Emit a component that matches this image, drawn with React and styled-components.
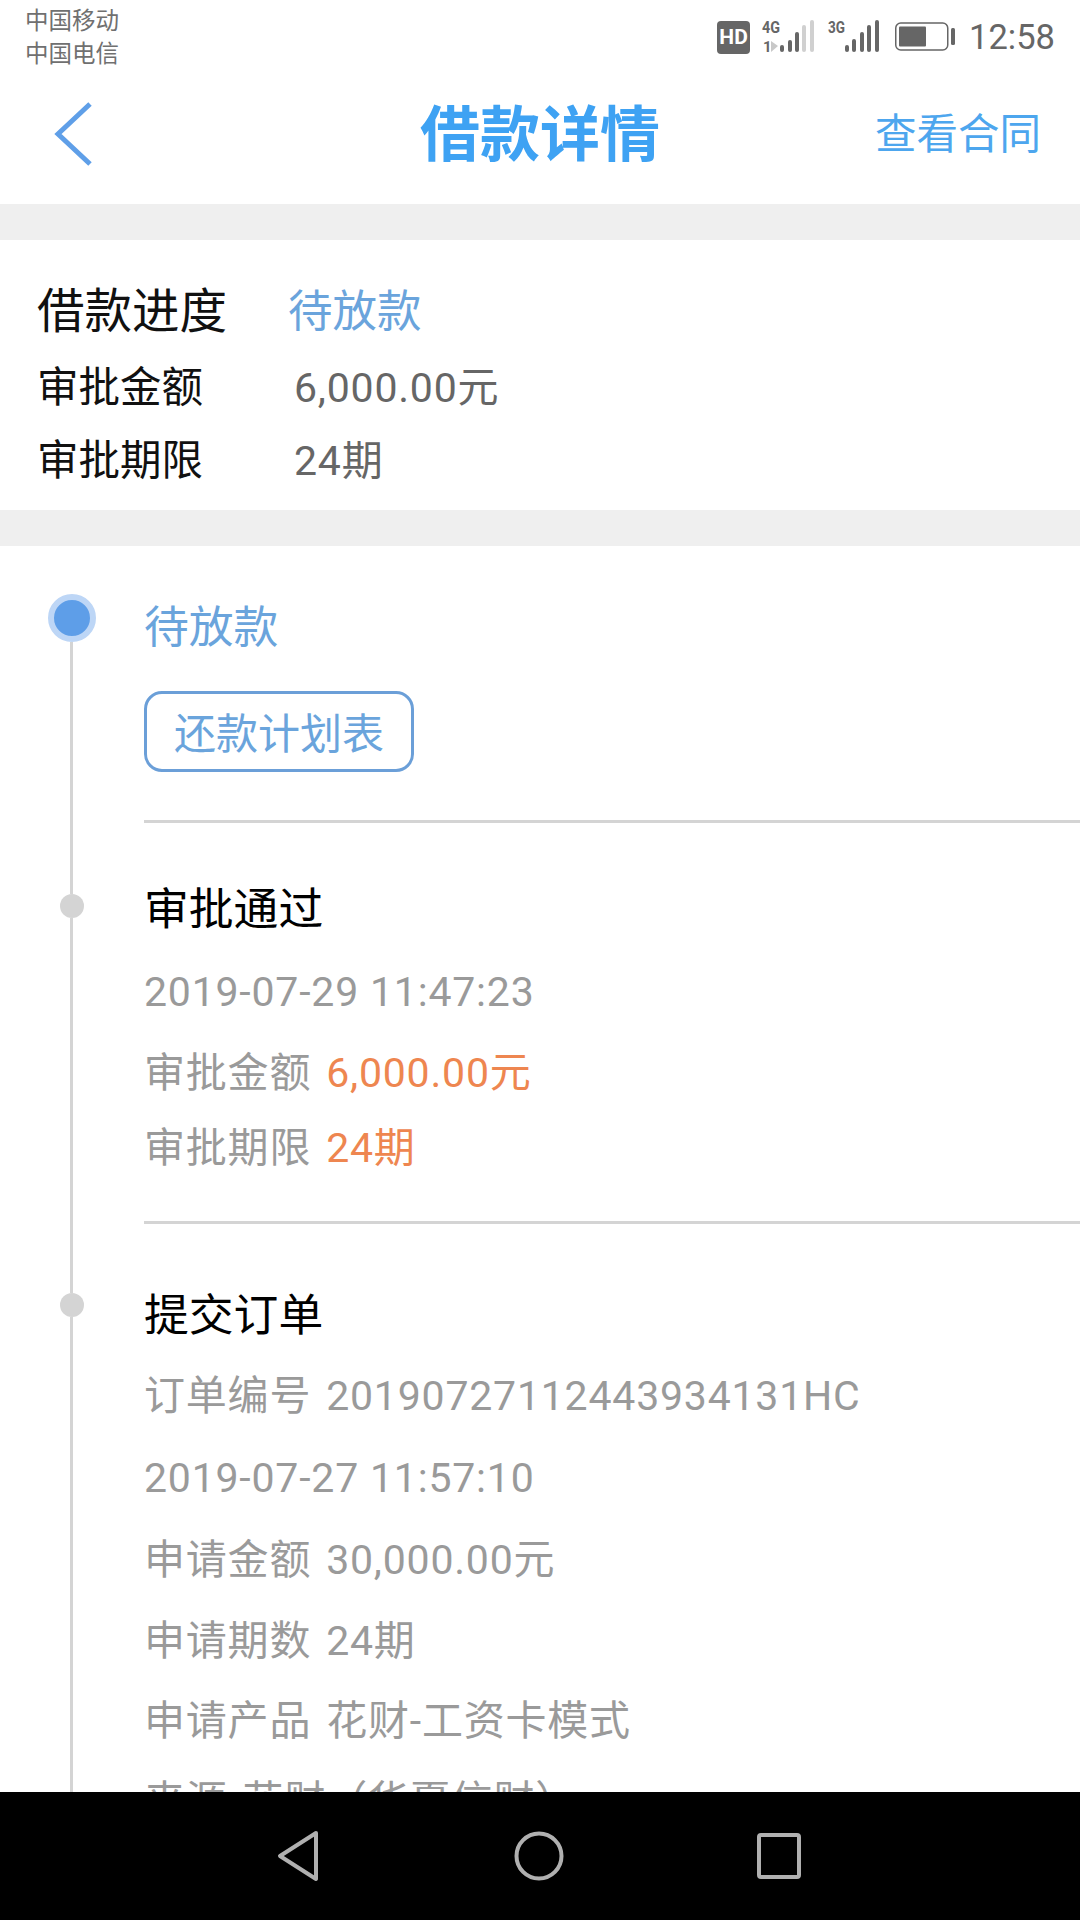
import styled, { createGlobalStyle } from "styled-components";

const GlobalStyle = createGlobalStyle`
  html, body {
    margin: 0;
    padding: 0;
    background: #fff;
  }
  body {
    font-family: Roboto, "Noto Sans CJK SC", sans-serif;
  }
`;

function App() {
  return (
    <>
      <GlobalStyle />
      <Screen>
        <StatusBar>
          <Carriers>
            <div>中国移动</div>
            <div>中国电信</div>
          </Carriers>
          <StatusIcons>
            <HdBadge>HD</HdBadge>
            <SignalIcons />
            <BatteryIcon />
            <Clock>12:58</Clock>
          </StatusIcons>
        </StatusBar>

        <NavBar>
          <BackButton>
            <svg width="40" height="64" viewBox="0 0 40 64" fill="none">
              <path d="M36 2 L4 32 L36 62" stroke="#5f9fe8" strokeWidth="5" />
            </svg>
          </BackButton>
          <Title>借款详情</Title>
          <ContractLink>查看合同</ContractLink>
        </NavBar>

        <Content>
          <Gap />
          <Summary>
            <SummaryHead>
              <HeadLabel>借款进度</HeadLabel>
              <HeadValue>待放款</HeadValue>
            </SummaryHead>
            <SummaryRow $mt={12}>
              <SummaryLabel>审批金额</SummaryLabel>
              <SummaryValue>6,000.00元</SummaryValue>
            </SummaryRow>
            <SummaryRow $mt={13}>
              <SummaryLabel>审批期限</SummaryLabel>
              <SummaryValue>24期</SummaryValue>
            </SummaryRow>
          </Summary>
          <Gap />

          <Timeline>
            <Step>
              <Rail $top={48}>
                <ActiveDot />
                <Wire />
              </Rail>
              <StepBody $pt={52} $pb={48}>
                <ActiveTitle>待放款</ActiveTitle>
                <PlanButton>还款计划表</PlanButton>
              </StepBody>
            </Step>

            <Step>
              <Rail>
                <Wire $h={71} />
                <Dot />
                <Wire />
              </Rail>
              <StepBody $pt={57} $pb={43}>
                <StepTitle>审批通过</StepTitle>
                <InfoRow $gap={22}>2019-07-29 11:47:23</InfoRow>
                <InfoRow $gap={21}>
                  <InfoLabel>审批金额</InfoLabel> <Amount>6,000.00元</Amount>
                </InfoRow>
                <InfoRow $gap={15}>
                  <InfoLabel>审批期限</InfoLabel> <Amount>24期</Amount>
                </InfoRow>
              </StepBody>
            </Step>

            <Step>
              <Rail>
                <Wire $h={69} />
                <Dot />
                <Wire />
              </Rail>
              <StepBody $pt={62} $pb={60} $last>
                <StepTitle>提交订单</StepTitle>
                <InfoRow $gap={20}>
                  <InfoLabel>订单编号</InfoLabel> 20190727112443934131HC
                </InfoRow>
                <InfoRow $gap={22}>2019-07-27 11:57:10</InfoRow>
                <InfoRow $gap={22}>
                  <InfoLabel>申请金额</InfoLabel> 30,000.00元
                </InfoRow>
                <InfoRow>
                  <InfoLabel>申请期数</InfoLabel> 24期
                </InfoRow>
                <InfoRow $gap={20}>
                  <InfoLabel>申请产品</InfoLabel> 花财-工资卡模式
                </InfoRow>
                <InfoRow $gap={20}>
                  <InfoLabel>来源</InfoLabel> 花财（华夏信财）
                </InfoRow>
              </StepBody>
            </Step>
          </Timeline>
        </Content>

        <BottomNav>
          <svg width="48" height="54" viewBox="0 0 48 54" fill="none">
            <path d="M41 4 L5 27 L41 50 Z" stroke="#b0b0b0" strokeWidth="4" strokeLinejoin="round" />
          </svg>
          <svg width="52" height="52" viewBox="0 0 52 52" fill="none">
            <circle cx="26" cy="26" r="22.5" stroke="#b0b0b0" strokeWidth="4" />
          </svg>
          <svg width="46" height="48" viewBox="0 0 46 48" fill="none">
            <rect x="3" y="3" width="40" height="42" rx="2" stroke="#b0b0b0" strokeWidth="4" />
          </svg>
        </BottomNav>
      </Screen>
    </>
  );
}

function SignalIcons() {
  const bars1 = [
    [2, 7, "#666"],
    [10, 12, "#666"],
    [17, 20, "#666"],
    [24, 27, "#d0d0d0"],
    [32, 32, "#d0d0d0"],
  ];
  const bars2 = [
    [67, 7],
    [74, 13],
    [82, 20],
    [89, 27],
    [97, 32],
  ];
  return (
    <SignalSvg width="122" height="40" viewBox="-20 0 122 40">
      <text x="-18" y="14" fontSize="17" fontWeight="700" fill="#666" fontFamily="Roboto, sans-serif" textLength="18" lengthAdjust="spacingAndGlyphs">4G</text>
      <text x="-17" y="33" fontSize="15" fontWeight="700" fill="#666" fontFamily="Roboto, sans-serif">1</text>
      <path d="M-9 22 L-2 27 L-9 33 Z" fill="#c8c8c8" />
      {bars1.map(([x, h, c]) => (
        <rect key={x} x={x - 2} y={33 - h} width="4" height={h} rx="2" fill={c} />
      ))}
      <text x="48" y="14" fontSize="17" fontWeight="700" fill="#666" fontFamily="Roboto, sans-serif" textLength="17" lengthAdjust="spacingAndGlyphs">3G</text>
      {bars2.map(([x, h]) => (
        <rect key={x} x={x - 2} y={33 - h} width="4" height={h} rx="2" fill="#666" />
      ))}
    </SignalSvg>
  );
}

function BatteryIcon() {
  return (
    <svg width="60" height="30" viewBox="0 0 60 30" fill="none">
      <rect x="0.75" y="1" width="52" height="27" rx="5" stroke="#666" strokeWidth="1.5" />
      <rect x="4" y="4.5" width="27" height="20" rx="1" fill="#666" />
      <rect x="56" y="6" width="4" height="17" rx="1.5" fill="#666" />
    </svg>
  );
}

export default App;

const Screen = styled.div`
  width: 1080px;
  height: 1920px;
  display: flex;
  flex-direction: column;
  overflow: hidden;
  background: #fff;
`;

const StatusBar = styled.div`
  height: 74px;
  flex: none;
  display: flex;
  justify-content: space-between;
  padding: 5px 25px 0 25px;
  box-sizing: border-box;
`;

const Carriers = styled.div`
  font-size: 23.5px;
  line-height: 33px;
  color: #707070;
`;

const StatusIcons = styled.div`
  display: flex;
  align-items: center;
  height: 64px;
`;

const SignalSvg = styled.svg`
  margin: 4px 13px 0 0;
  overflow: visible;
`;

const HdBadge = styled.span`
  width: 33px;
  height: 33px;
  border-radius: 4px;
  background: #666;
  color: #fff;
  font-size: 21px;
  font-weight: 700;
  line-height: 33px;
  text-align: center;
  margin-right: 10px;
`;

const Clock = styled.span`
  font-size: 34.5px;
  color: #666;
  margin-left: 14px;
`;

const NavBar = styled.div`
  height: 130px;
  flex: none;
  display: grid;
  grid-template-columns: 1fr auto 1fr;
  align-items: center;
  padding: 0 39px 16px 39px;
  box-sizing: border-box;
`;

const BackButton = styled.div`
  display: flex;
  margin: 6px 0 0 15px;
`;

const Title = styled.div`
  font-size: 60px;
  font-weight: 700;
  color: #3ea2f3;
  margin-top: -4px;
`;

const ContractLink = styled.div`
  justify-self: end;
  font-size: 41.5px;
  color: #4da6ee;
`;

const Content = styled.div`
  flex: 1;
  min-height: 0;
  overflow: hidden;
`;

const Gap = styled.div`
  height: 36px;
  background: #efefef;
`;

const Summary = styled.div`
  height: 270px;
  box-sizing: border-box;
  padding: 32px 0 0 37px;
`;

const SummaryHead = styled.div`
  display: flex;
  height: 70px;
  align-items: center;
`;

const HeadLabel = styled.div`
  width: 251px;
  font-size: 47.5px;
  color: #111;
`;

const HeadValue = styled.div`
  font-size: 44.5px;
  color: #6aa4dc;
`;

const SummaryRow = styled.div`
  display: flex;
  align-items: center;
  height: 60px;
  margin-top: ${(p) => p.$mt}px;
`;

const SummaryLabel = styled.div`
  width: 257px;
  font-size: 41.5px;
  color: #111;
`;

const SummaryValue = styled.div`
  font-size: 41px;
  letter-spacing: 0.8px;
  color: #666;
`;

const Timeline = styled.div`
  display: flex;
  flex-direction: column;
`;

const Step = styled.div`
  display: flex;
`;

const Rail = styled.div`
  width: 143px;
  margin-right: 1px;
  flex: none;
  display: flex;
  flex-direction: column;
  align-items: center;
  padding-top: ${(p) => p.$top || 0}px;
`;

const Wire = styled.div`
  width: 3px;
  background: #d4d4d4;
  flex: ${(p) => (p.$h ? "none" : 1)};
  height: ${(p) => (p.$h ? `${p.$h}px` : "auto")};
`;

const Dot = styled.div`
  width: 24px;
  height: 24px;
  border-radius: 50%;
  background: #d4d4d4;
  flex: none;
`;

const ActiveDot = styled.div`
  width: 36px;
  height: 36px;
  border-radius: 50%;
  background: #5e9ee8;
  border: 6px solid #bdd6f6;
  flex: none;
`;

const StepBody = styled.div`
  flex: 1;
  padding-top: ${(p) => p.$pt}px;
  padding-bottom: ${(p) => p.$pb}px;
  border-bottom: ${(p) => (p.$last ? "none" : "3px solid #d4d4d4")};
`;

const ActiveTitle = styled.div`
  font-size: 44.8px;
  line-height: 60px;
  color: #6aa4dc;
`;

const PlanButton = styled.button`
  display: block;
  width: 270px;
  height: 81px;
  margin-top: 33px;
  padding: 0 0 2px;
  border: 3px solid #6b9fd8;
  border-radius: 18px;
  background: #fff;
  font-family: inherit;
  font-size: 42px;
  color: #6aa4dc;
`;

const StepTitle = styled.div`
  font-size: 44.8px;
  line-height: 60px;
  color: #000;
`;

const InfoRow = styled.div`
  font-size: 41px;
  line-height: 60px;
  letter-spacing: 0.8px;
  margin-top: ${(p) => p.$gap ?? 21}px;
  color: #9a9a9a;
  white-space: nowrap;
`;

const InfoLabel = styled.span`
  margin-right: 4px;
`;

const Amount = styled.span`
  color: #ee8650;
`;

const BottomNav = styled.div`
  height: 128px;
  flex: none;
  background: #000;
  display: flex;
  align-items: center;
  padding-left: 275px;
  & > svg:nth-child(2) {
    margin-left: 190px;
  }
  & > svg:nth-child(3) {
    margin-left: 191px;
  }
`;
